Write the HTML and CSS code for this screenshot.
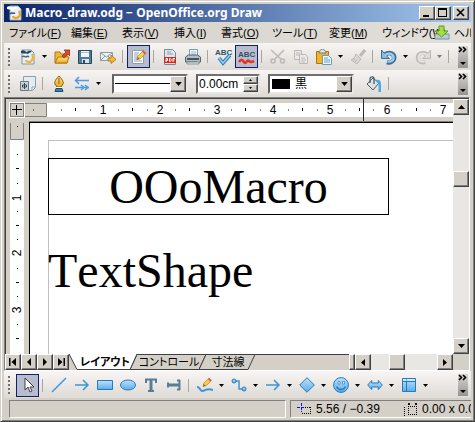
FILE: index.html
```html
<!DOCTYPE html>
<html lang="ja">
<head>
<meta charset="utf-8">
<meta name="viewport" content="width=device-width, initial-scale=1">
<title>Macro_draw.odg - OpenOffice.org Draw</title>
<link rel="stylesheet" href="styles.css">
</head>
<body>
<svg class="defs" aria-hidden="true">
  <defs>
    <linearGradient id="blue" x1="0" y1="0" x2="0" y2="1"><stop offset="0" stop-color="#bfe2fb"/><stop offset="1" stop-color="#58aeea"/></linearGradient>
    <linearGradient id="gold" x1="0" y1="0" x2="0" y2="1"><stop offset="0" stop-color="#ffe680"/><stop offset="1" stop-color="#f0a818"/></linearGradient>
    <symbol id="doc" viewBox="0 0 16 16">
      <path d="M2 1h9l3 3v11H2z" fill="#e8f0f4" stroke="#7f97a5"/>
      <path d="M1 2c3-2 4 1 6 1 2-2 4-1 5 0-2 0-3 1-4 2C6 4 4 5 1 4z" fill="#26485f"/>
      <path d="M2 8c2-2 3 0 4 0 1-1 2-1 3 0" fill="none" stroke="#47677b" stroke-width="1.5"/>
      <path d="M12 5c2 4 0 8-3 8-2 0-3-1-3-2" fill="none" stroke="#f3b32b" stroke-width="2"/>
    </symbol>
    <symbol id="arrow-r" viewBox="0 0 16 16"><path d="M1 8h12M9 3l5 5-5 5" fill="none" stroke="#3b95dd" stroke-width="1.5"/></symbol>
    <symbol id="down" viewBox="0 0 5 3"><path d="M0 0h5L2.500 3z"/></symbol>
    <symbol id="more" viewBox="0 0 10 22"><path d="M1 1l2.500 2.500L1 6M5 1l2.500 2.500L5 6" fill="none" stroke="#000" stroke-width="1.600"/><path d="M2 16h6l-3 3z"/></symbol>
    <symbol id="pencil" viewBox="0 0 16 16">
      <path d="M5 11l1-4 6-6 3 3-6 6z" fill="#f8cf48" stroke="#a57c20" stroke-width=".8"/><path d="M11 2l1.500-1.500 3 3L14 5z" fill="#e4524b"/><path d="M5 11l1-3 2 2z" fill="#8a6030"/>
    </symbol>
  </defs>
</svg>

<div class="window">
  <header class="titlebar">
    <svg class="i16" viewBox="0 0 16 16"><path d="M3 1h8l3 3v11H3z" fill="#e8f0f4" stroke="#9aa"/><path d="M0 2c3-2 4 1 6 1 2-2 4-1 5 0-2 0-3 1-4 2C5 4 3 5 0 4z" fill="#fff"/><path d="M12 6c2 4 0 7-3 7-2 0-3-1-3-2" fill="none" stroke="#f0a018" stroke-width="2"/><path d="M3 9c2-2 3 0 5-1" fill="none" stroke="#357" stroke-width="1.500"/></svg>
    <h1 class="title">Macro_draw.odg − OpenOffice.org Draw</h1>
    <div class="caption-buttons">
      <button class="raised cap" aria-label="最小化"><svg viewBox="0 0 12 10"><path d="M2 7h6v2H2z"/></svg></button>
      <button class="raised cap" aria-label="最大化"><svg viewBox="0 0 12 10"><path d="M1 0h9v9H1zM2 2v6h7V2z" fill-rule="evenodd"/></svg></button>
      <button class="raised cap close" aria-label="閉じる"><svg viewBox="0 0 12 10"><path d="M2 1l7 7M9 1L2 8" fill="none" stroke="#000" stroke-width="1.600"/></svg></button>
    </div>
  </header>

  <nav class="menubar">
    <button>ファイル(<u>F</u>)</button><button>編集(<u>E</u>)</button><button>表示(<u>V</u>)</button><button>挿入(<u>I</u>)</button><button>書式(<u>O</u>)</button><button>ツール(<u>T</u>)</button><button>変更(<u>M</u>)</button><button>ウィンドウ(<u>W</u>)</button><button>ヘル</button>
    <svg class="update i16" viewBox="0 0 16 16"><path d="M1 9h14v5H1z" fill="#b8cbd6" stroke="#7892a2"/><path d="M5 1h5v5h4l-6.500 6L1 6h4z" fill="#a6de42" stroke="#5a9c1c"/></svg>
  </nav>

  <div class="toolbar" role="toolbar" aria-label="標準">
    <i class="grip"></i>
    <button class="tool" aria-label="新規"><svg class="i16"><use href="#doc"/></svg></button>
    <button class="drop" aria-label="新規の種類"><svg><use href="#down"/></svg></button>
    <button class="tool" aria-label="開く"><svg class="i16" viewBox="0 0 16 16"><path d="M1 14V3h5l1 2h6v9z" fill="#f3b735" stroke="#ad761a"/><path d="M1 14l3-6h11l-2 6z" fill="url(#gold)" stroke="#ad761a"/><path d="M8 7l4-4-2-2h6v6l-2-2-4 4z" fill="#d94a26" stroke="#8c2a14" stroke-width=".7"/></svg></button>
    <button class="tool" aria-label="保存"><svg class="i16" viewBox="0 0 16 16"><path d="M1.500 1.500h13v13h-13z" fill="#4c7d9c" stroke="#27495f"/><path d="M4 2h8v6H4z" fill="#f3f6f8"/><path d="M4 3h8v1H4z" fill="#a9c3d2"/><path d="M5 10h7v4H5z" fill="#dce4e9"/><path d="M6 11h2v3H6z" fill="#27495f"/></svg></button>
    <button class="tool" aria-label="メール送信"><svg class="i16" viewBox="0 0 16 16"><path d="M.5 3.500h12v8H.5z" fill="#edf1f3" stroke="#8b9ba4"/><path d="M1 4l5.500 4L12 4M1 11l4-4M12 11L8 7" fill="none" stroke="#8b9ba4"/><path d="M8 9h3V6l5 4.500-5 4V12H8z" fill="#f6b83a" stroke="#a87112" stroke-width=".8"/></svg></button>
    <i class="sep"></i>
    <button class="tool on" aria-label="編集モード"><svg class="i16" viewBox="0 0 16 16"><path d="M1.500 1.500h11v13h-11z" fill="#fff" stroke="#8aa0b0"/><path d="M3 4h5M3 6h4M3 8h3M3 10h3M3 12h8" stroke="#8aa0b0"/><use href="#pencil" x="1" y="1" width="15" height="14"/></svg></button>
    <i class="sep"></i>
    <button class="tool" aria-label="PDF"><svg class="i16" viewBox="0 0 16 16"><path d="M2.500.5h8l3 3v12h-11z" fill="#dce7ed" stroke="#718e9f"/><path d="M5 3h4M5 5h6" stroke="#8aa0b0"/><path d="M2 8h12v6H2z" fill="#e02318"/><path d="M4 13V9.500h1.500v2H4M7.500 9.500v3c2.500 0 2.500-3 0-3M11 13V9.500h2M11 11h1.500" fill="none" stroke="#fff"/></svg></button>
    <button class="tool" aria-label="印刷"><svg class="i16" viewBox="0 0 16 16"><path d="M4.500.5h8V8h-8z" fill="#f6fafc" stroke="#7b9cb0"/><path d="M6 3h5M6 5h5" stroke="#82bce2"/><path d="M.5 8l3-2h9l3 2v5H.5z" fill="#b3bfc7" stroke="#546571"/><path d="M2 9h12v2H2z" fill="#47545d"/><path d="M2 13h12v2H2z" fill="#dde5e9" stroke="#546571" stroke-width=".6"/><path d="M12 12h2v1h-2z" fill="#7bd13b"/></svg></button>
    <i class="sep"></i>
    <button class="tool" aria-label="スペルチェック"><svg class="i18" viewBox="0 0 18 18"><text class="abc" x="0" y="7">ABC</text><path d="M4 10l4 5 7-8" fill="none" stroke="#2877ad" stroke-width="3.500"/><path d="M4 10l4 5 7-8" fill="none" stroke="#8fd2fa" stroke-width="1.600"/></svg></button>
    <button class="tool on" aria-label="自動スペルチェック"><svg class="i18" viewBox="0 0 18 18"><text class="abc" x="0" y="9">ABC</text><path d="M1 14c2-3 3-3 5 0s3-3 5-1 3 1 5 0" fill="none" stroke="#e8321e" stroke-width="2.600"/></svg></button>
    <i class="sep"></i>
    <button class="tool" aria-label="切り取り" disabled><svg class="i16" viewBox="0 0 16 16"><g fill="none" stroke="#bcbab8" stroke-width="1.600"><path d="M1 1l10 9M14 1L5 10"/><circle cx="3" cy="12" r="2"/><circle cx="12.500" cy="12" r="2"/></g></svg></button>
    <button class="tool" aria-label="コピー" disabled><svg class="i16" viewBox="0 0 16 16"><g fill="#ebe9e8" stroke="#bcbab8"><path d="M1.500 1.500h7v9h-7z"/><path d="M6.500 5.500h6l2 2v7h-8z"/><path d="M3 4h4M3 6h3M8 9h4M8 11h5M8 13h4"/></g></svg></button>
    <button class="tool" aria-label="貼り付け"><svg class="i16" viewBox="0 0 16 16"><path d="M.5 2.500h12v12H.5z" fill="#f0b429" stroke="#a97711"/><path d="M3 4c0-3 2-3 3.500-4C8 1 10 1 10 4z" fill="#dce2e6" stroke="#6d7c86"/><path d="M6.500 6.500h6l3 3v6h-9z" fill="#eff7fc" stroke="#6d9abb"/><path d="M8 9h4M8 11h6M8 13h6" stroke="#5ba0d1"/></svg></button>
    <button class="drop" aria-label="貼り付けの形式"><svg><use href="#down"/></svg></button>
    <button class="tool" aria-label="書式の複写" disabled><svg class="i16" viewBox="0 0 16 16"><path d="M15 1l-5 6" stroke="#bcbab8" stroke-width="3"/><path d="M6 5l5 5-4 5-6-4c3-1 4-3 5-6z" fill="#d8d6d4" stroke="#bcbab8"/><path d="M3 11l2-1M5 13l2-2" stroke="#bcbab8"/></svg></button>
    <i class="sep"></i>
    <button class="tool" aria-label="元に戻す"><svg class="i16" viewBox="0 0 16 16"><path d="M3 6c6-4 11-1 10 4-1 3-4 4-7 3" fill="none" stroke="#3a6d98" stroke-width="4.500"/><path d="M.5 1v8.500h8L5.500 7 8 5 3 4z" fill="#86bce4" stroke="#3a6d98"/><path d="M4 6c5-3 9-1 8.500 4-1 2-3 3-6 2.500" fill="none" stroke="#9bcaed" stroke-width="2.400"/></svg></button>
    <button class="drop" aria-label="元に戻す履歴"><svg><use href="#down"/></svg></button>
    <button class="tool" aria-label="やり直し" disabled><svg class="i16" viewBox="0 0 16 16"><path d="M13 6C7 2 2 5 3 10c1 3 4 4 7 3" fill="none" stroke="#bcbab8" stroke-width="4"/><path d="M15.500 1v8.500h-8l3-2.500L8 5l5-1z" fill="#dedcda" stroke="#bcbab8"/><path d="M12 6C7 3 3 5 3.500 10c1 2 3 3 6 2.500" fill="none" stroke="#e6e4e2" stroke-width="2"/></svg></button>
    <button class="drop" aria-label="やり直し履歴" disabled><svg><use href="#down"/></svg></button>
    <i class="sep"></i>
    <button class="overflow" aria-label="その他"><svg><use href="#more"/></svg></button>
  </div>

  <div class="toolbar" role="toolbar" aria-label="線と塗りつぶし">
    <i class="grip"></i>
    <button class="tool" aria-label="スタイル"><svg class="i16" viewBox="0 0 16 16"><path d="M3.500.5h12v11l-3 3h-9z" fill="#e5ecf0" stroke="#8aa0ae"/><path d="M15 11h-3v3" fill="#fff" stroke="#8aa0ae"/><path d="M.5 5.500h8v9h-8z" fill="#c8d2d9" stroke="#667a88"/><path d="M4.500 7v6M2.500 9h4v2h-4z" fill="#fff" stroke="#34444f"/></svg></button>
    <i class="sep"></i>
    <button class="tool" aria-label="線"><svg class="i16" viewBox="0 0 16 16"><path d="M8 0c3 3 5 6 4 8l-2 3H6L4 8c-1-2 1-5 4-8z" fill="url(#gold)" stroke="#805810"/><path d="M8 2v6" stroke="#805810"/><path d="M5 11h6v1H5z" fill="#f7fafc"/><path d="M5 12.500h6l1 3H4z" fill="#3a7fb5" stroke="#1c4a70"/></svg></button>
    <button class="tool" aria-label="線の端"><svg class="i16" viewBox="0 0 16 16"><path d="M1 4.500h14M5 1L1.500 4.500 5 8M1 11.500h14M7 9l3 2.500L7 14M11 9l3 2.500-3 2.500" fill="none" stroke="#4c9cde" stroke-width="1.500"/></svg></button>
    <button class="drop" aria-label="線の端の種類"><svg><use href="#down"/></svg></button>
    <button class="field line-style" aria-label="線のスタイル"><span class="stroke"></span><span class="raised knob"><svg><use href="#down"/></svg></span></button>
    <div class="field width"><input aria-label="線の幅" value="0.00cm"><span class="spin"><button class="raised" aria-label="増やす"><svg viewBox="0 0 3 2"><path d="M0 2h3L1.500 0z"/></svg></button><button class="raised" aria-label="減らす"><svg viewBox="0 0 3 2"><path d="M0 0h3L1.500 2z"/></svg></button></span></div>
    <button class="field color" aria-label="線の色 黒"><span class="swatch"></span><span class="name">黒</span><span class="raised knob"><svg><use href="#down"/></svg></span></button>
    <button class="tool fill" aria-label="塗りつぶし"><svg class="i16" viewBox="0 0 16 16"><path d="M1 8l6-6 6 5-6 7z" fill="#dce1e4" stroke="#4d5b65"/><path d="M4 7V3c0-3 5-3 4 1v4" fill="none" stroke="#4d5b65" stroke-width="1.300"/><path d="M9 4c4-1 6 0 6 4v8h-2.500V8z" fill="#4fa9e6"/></svg></button>
    <i class="sep"></i>
    <button class="overflow" aria-label="その他"><svg><use href="#more"/></svg></button>
  </div>

  <main class="editor">
    <div class="workspace">
      <div class="corner"><button aria-label="原点"><svg viewBox="0 0 12 12"><path d="M1 5.500h10M5.500 1v10" stroke="#000"/></svg></button></div>
      <svg class="hruler">
        <rect class="strip" y="4" width="100%" height="14"/>
        <path class="margin" d="M0 4.500h21.500v13H0"/>
        <path d="M8 11h1M36 11h1M65 11h1M93 11h1M122 11h1M150 11h1M179 11h1M206 11h1M235 11h1M263 11h1M292 11h1M320 11h1M348 11h1M376 11h1M405 11h1" stroke="#000"/>
        <path d="M50.500 9v3M107.500 9v3M164.500 9v3M220.500 9v3M277.500 9v3M334.500 9v3M391.500 9v3" stroke="#000"/>
        <path d="M338.500 0v22" stroke="#222a3c"/>
        <g class="nums"><text x="78" y="15">1</text><text x="135" y="15">2</text><text x="192" y="15">3</text><text x="248" y="15">4</text><text x="305" y="15">5</text><text x="362" y="15">6</text><text x="418" y="15">7</text></g>
      </svg>
      <svg class="vruler">
        <rect class="strip" x="4" width="14" height="100%"/>
        <path class="margin" d="M4.500 0v16.500h13V0"/>
        <path d="M11 3.500h1M11 31.500h1M11 60.500h1M11 88.500h1M11 116.500h1M11 145.500h1M11 173.500h1M11 201.500h1M10 45.500h3M10 102.500h3M10 159.500h3M10 215.500h3" stroke="#000"/>
        <g class="nums"><text transform="translate(15 75) rotate(-90)">1</text><text transform="translate(15 130) rotate(-90)">2</text><text transform="translate(15 187) rotate(-90)">3</text></g>
      </svg>
      <section class="canvas">
        <div class="page">
          <div class="shape boxed">OOoMacro</div>
          <div class="shape">TextShape</div>
        </div>
      </section>
      <div class="vscroll">
        <button class="raised" aria-label="上へ"><svg viewBox="0 0 7 4"><path d="M0 4h7L3.500 0z"/></svg></button>
        <span class="before"></span><span class="raised thumb"></span><span class="after"></span>
        <button class="raised" aria-label="下へ"><svg viewBox="0 0 7 4"><path d="M0 0h7L3.500 4z"/></svg></button>
      </div>
    </div>
    <div class="bottom-row">
      <button class="raised" aria-label="最初"><svg class="nav" viewBox="0 0 8 8"><path d="M0 0h1.500v8H0zM7 0v8L2.500 4z"/></svg></button>
      <button class="raised" aria-label="前"><svg class="nav" viewBox="0 0 8 8"><path d="M6 0v8L2 4z"/></svg></button>
      <button class="raised" aria-label="次"><svg class="nav" viewBox="0 0 8 8"><path d="M2 0v8l4-4z"/></svg></button>
      <button class="raised" aria-label="最後"><svg class="nav" viewBox="0 0 8 8"><path d="M6.500 0H8v8H6.500zM1 0v8l4.500-4z"/></svg></button>
      <div class="tabs">
        <button class="tab active"><svg viewBox="0 0 68 16" preserveAspectRatio="none"><path d="M0 0l8 15.500h53L68 0"/></svg><span>レイアウト</span></button>
        <button class="tab"><svg viewBox="0 0 76 16" preserveAspectRatio="none"><path d="M7 .5L0 15.500h69L76 .5z"/></svg><span>コントロール</span></button>
        <button class="tab last"><svg viewBox="0 0 56 16" preserveAspectRatio="none"><path d="M7 .5L0 15.500h49L56 .5z"/></svg><span>寸法線</span></button>
      </div>
      <span class="raised splitter"></span>
      <div class="hscroll">
        <button class="raised" aria-label="左へ"><svg viewBox="0 0 4 7"><path d="M4 0v7L0 3.500z"/></svg></button>
        <span class="before"></span><span class="raised thumb"></span><span class="after"></span>
        <button class="raised" aria-label="右へ"><svg viewBox="0 0 4 7"><path d="M0 0v7l4-3.500z"/></svg></button>
      </div>
    </div>
  </main>

  <div class="toolbar drawing" role="toolbar" aria-label="図形描画">
    <i class="grip"></i>
    <button class="tool on" aria-label="選択"><svg class="i16" viewBox="0 0 16 16"><path d="M5 1v12l3-3 2 5 2-1-2-4h4z" fill="#fff" stroke="#39434a"/></svg></button>
    <i class="sep"></i>
    <button class="tool" aria-label="線"><svg class="i16" viewBox="0 0 16 16"><path d="M1 15L15 1" stroke="#3b95dd" stroke-width="1.500"/></svg></button>
    <button class="tool" aria-label="矢印"><svg class="i16"><use href="#arrow-r"/></svg></button>
    <button class="tool" aria-label="四角形"><svg class="i16" viewBox="0 0 16 16"><path d="M.5 3.500h15v9H.5z" fill="url(#blue)" stroke="#2878bd"/></svg></button>
    <button class="tool" aria-label="楕円"><svg class="i16" viewBox="0 0 16 16"><ellipse cx="8" cy="8" rx="7.500" ry="5" fill="url(#blue)" stroke="#2878bd"/></svg></button>
    <button class="tool" aria-label="テキスト"><svg class="i16" viewBox="0 0 16 16"><path d="M2 2.500h12M3 2v4M13 2v4M5 14h6" fill="none" stroke="#557f98" stroke-width="2"/><path d="M8 2v12" stroke="#557f98" stroke-width="3"/></svg></button>
    <button class="tool" aria-label="縦書きテキスト"><svg class="i16" viewBox="0 0 16 16"><path d="M13.500 3v10M11 3.500h3M11 12.500h3M2 5.500v5" fill="none" stroke="#557f98" stroke-width="2"/><path d="M2 8h12" stroke="#557f98" stroke-width="3"/></svg></button>
    <i class="sep"></i>
    <button class="tool" aria-label="曲線"><svg class="i16" viewBox="0 0 16 16"><path d="M0 10c3-1 3 5 6 4s4-3 10-1" fill="none" stroke="#3b95dd" stroke-width="2"/><use href="#pencil" x="2" width="13" height="14"/></svg></button>
    <button class="drop" aria-label="曲線の種類"><svg><use href="#down"/></svg></button>
    <button class="tool" aria-label="コネクタ"><svg class="i16" viewBox="0 0 16 16"><path d="M3 4h5v8h5" fill="none" stroke="#3b95dd" stroke-width="1.500"/><circle cx="3" cy="4" r="2" fill="url(#blue)" stroke="#2878bd"/><circle cx="13" cy="12" r="2" fill="url(#blue)" stroke="#2878bd"/></svg></button>
    <button class="drop" aria-label="コネクタの種類"><svg><use href="#down"/></svg></button>
    <button class="tool" aria-label="線と矢印"><svg class="i16"><use href="#arrow-r"/></svg></button>
    <button class="drop" aria-label="矢印の種類"><svg><use href="#down"/></svg></button>
    <button class="tool" aria-label="基本図形"><svg class="i16" viewBox="0 0 16 16"><path d="M8 .7L15.300 8 8 15.300.7 8z" fill="url(#blue)" stroke="#2878bd"/></svg></button>
    <button class="drop" aria-label="基本図形の種類"><svg><use href="#down"/></svg></button>
    <button class="tool" aria-label="記号図形"><svg class="i16" viewBox="0 0 16 16"><circle cx="8" cy="8" r="7.400" fill="url(#blue)" stroke="#2878bd"/><path d="M5 4.500h2v2.500H5zM9.500 4.500h2v2.500h-2z" fill="#fff" stroke="#2878bd" stroke-width=".7"/><path d="M3.500 9.500c2 4 7 4 9 0" fill="none" stroke="#2878bd" stroke-width="1.400"/></svg></button>
    <button class="drop" aria-label="記号の種類"><svg><use href="#down"/></svg></button>
    <button class="tool" aria-label="ブロック矢印"><svg class="i16" viewBox="0 0 16 16"><path d="M.7 8l4-4.500V6h6.600V3.500l4 4.500-4 4.500V10H4.700v2.500z" fill="url(#blue)" stroke="#2878bd"/></svg></button>
    <button class="drop" aria-label="ブロック矢印の種類"><svg><use href="#down"/></svg></button>
    <button class="tool" aria-label="フローチャート"><svg class="i16" viewBox="0 0 16 16"><path d="M1.500 1.500h13v13h-13z" fill="url(#blue)" stroke="#2878bd"/><path d="M1 4.500h14M5.500 1v14" stroke="#2878bd"/><path d="M2 3h12" stroke="#e8f5fd"/></svg></button>
    <button class="drop" aria-label="フローチャートの種類"><svg><use href="#down"/></svg></button>
    <button class="overflow" aria-label="その他"><svg><use href="#more"/></svg></button>
  </div>

  <footer class="status">
    <div class="cell"></div>
    <div class="cell info">
      <svg class="i16" viewBox="0 0 16 16"><path d="M1 6.500h9M5.500 2v9" stroke="#1111d8" stroke-dasharray="3 1"/><path d="M9 6.500h6M14.500 6v8M6 12.500h9" fill="none" stroke="#000" stroke-dasharray="1 1"/></svg>
      <span class="pos">5.56 / −0.39</span>
      <svg class="i16" viewBox="0 0 16 16"><path d="M6.500 5v9M6 5.500h9M14.500 5v9M6 13.500h9M2.500 6v9" fill="none" stroke="#000" stroke-dasharray="1 1"/><path d="M6 2l2 2M8 2L6 4M13 2l2 2M15 2l-2 2" stroke="#000" stroke-width=".9"/></svg>
      <span>0.00 x 0.00</span>
    </div>
  </footer>
</div>
</body>
</html>
```
FILE: styles.css
```css
* { box-sizing: border-box; }
html, body { margin: 0; height: 100%; }
body {
  overflow: hidden;
  font: 12px/16px "Liberation Sans", "Noto Sans CJK JP", sans-serif;
  font-feature-settings: "palt";
  color: #000;
}
button, input { font: inherit; font-feature-settings: inherit; color: inherit; padding: 0; border: 0; background: none; border-radius: 0; }
button { display: flex; align-items: center; justify-content: center; flex: none; white-space: nowrap; }
svg { flex: none; display: block; }
.defs { position: absolute; width: 0; height: 0; }
.i16 { width: 16px; height: 16px; }
.i18 { width: 18px; height: 18px; }

.window {
  height: 100vh;
  display: flex;
  flex-direction: column;
  background: #d4d0c8;
  border: 1px solid;
  border-color: #d4d0c8 #404040 #404040 #d4d0c8;
  box-shadow: inset 1px 1px #fff, inset -1px -1px #808080;
  padding: 3px;
}
.raised {
  background: #d4d0c8;
  border: 1px solid;
  border-color: #fff #404040 #404040 #fff;
  box-shadow: inset -1px -1px #808080;
}

.titlebar {
  flex: none;
  display: flex;
  align-items: center;
  height: 18px;
  padding: 0 2px 0 3px;
  background: linear-gradient(to right, #0a246a, #a6caf0);
}
.title { margin: 0 0 0 2px; flex: 1; min-width: 0; overflow: hidden; white-space: nowrap; color: #fff; font: bold 12px/18px "Noto Sans", sans-serif; }
.caption-buttons { display: flex; }
.cap { width: 16px; height: 14px; }
.cap svg { width: 12px; height: 10px; }
.close { margin-left: 2px; }

.menubar {
  position: relative;
  flex: none;
  display: grid;
  grid-template-columns: 62px 51px 52px 47px 51px 57px 53px 72px auto;
  height: 21px;
  padding-left: 5px;
  overflow: hidden;
  font-size: 11px;
  background: linear-gradient(to right, #d4d0c8, #e2dfda);
}
.menubar button { justify-content: flex-start; overflow: visible; }
.update { position: absolute; right: 21px; top: 3px; }

.toolbar {
  flex: none;
  display: flex;
  align-items: center;
  height: 27px;
  padding-left: 4px;
  background: linear-gradient(#f7f4f3, #dedad5);
}
.grip { flex: none; width: 2px; height: 18px; margin-right: 6px; background: repeating-linear-gradient(#74716c 0 2px, transparent 2px 4px); }
.tool { width: 23px; height: 23px; }
.on { border: 1px solid #0a246a; background: #b8bccd; }
.drop { width: 11px; height: 23px; }
.drop svg, .knob svg { width: 5px; height: 3px; }
.drop:disabled svg { fill: #777; }
.sep { flex: none; width: 8px; height: 13px; background: linear-gradient(#a9a6a2, #a9a6a2) 3px 0 / 1px 100% no-repeat; }
.overflow { width: 10px; height: 22px; margin: 0 3px 0 auto; background: linear-gradient(#d8d5d2, #969390); }
.overflow svg { width: 10px; height: 22px; }
.abc { font: bold 8px "Liberation Sans", sans-serif; fill: #315367; }

.field {
  display: flex;
  align-items: stretch;
  height: 20px;
  background: #fff;
  border: 2px solid;
  border-color: #707070 #e8e6e2 #e8e6e2 #606060;
}
.knob { flex: none; width: 16px; display: flex; align-items: center; justify-content: center; }
.knob svg { width: 7px; height: 4px; }
.line-style { width: 76px; margin: 0 8px; }
.stroke { flex: 1; align-self: center; height: 1px; margin-left: 1px; background: #000; }
.width { width: 64px; margin-right: 8px; }
.width input { flex: 1; min-width: 0; padding-left: 1px; outline: 0; }
.spin { flex: none; width: 15px; display: grid; grid-template-rows: 1fr 1fr; }
.spin svg { width: 3px; height: 2px; }
.color { width: 86px; }
.swatch { width: 18px; height: 10px; margin-left: 2px; align-self: center; background: #000; }
.name { flex: 1; text-align: left; padding-left: 5px; }
.fill { margin-left: 8px; }

.editor {
  flex: 1;
  min-height: 0;
  display: flex;
  flex-direction: column;
  margin-right: 1px;
  border-top: 1px solid #808080;
  border-left: 1px solid #808080;
  border-bottom: 1px solid #fff;
  border-right: 1px solid #fff;
}
.workspace {
  flex: 1;
  min-height: 0;
  display: grid;
  grid-template: 22px 1fr / 19px 4px 1fr 16px;
  border-top: 1px solid #404040;
  border-left: 1px solid #404040;
}
.corner { padding: 3px 0 0 3px; }
.corner button { width: 16px; height: 16px; border: 1px solid #fff; outline: 1px solid #808080; outline-offset: -2px; }
.corner svg { width: 12px; height: 12px; }
.hruler { grid-column: 2 / 4; width: 100%; height: 22px; }
.vruler { grid-area: 2 / 1 / 3 / 3; width: 100%; height: 100%; padding-top: 2px; }
.strip { fill: #fff; }
.margin { fill: #d4d0c8; stroke: #808080; }
.nums { font: 12px "Liberation Sans", sans-serif; text-anchor: middle; }
.canvas { grid-area: 2 / 3; min-width: 0; overflow: hidden; background: #fff; border-top: 1px solid #808080; box-shadow: inset 1px 1px #000; padding: 18px 0 0 19px; }
.page { height: 100%; border-top: 1px solid #c0c0c0; border-left: 1px solid #c0c0c0; padding-top: 17px; }
.shape { font: 48px/55px "Liberation Serif", serif; font-kerning: none; margin-left: -1px; }
.boxed { width: 341px; max-width: 100%; border: 1px solid #000; text-align: center; margin-bottom: 28px; }
.vscroll { grid-area: 1 / 4 / 3 / 5; display: flex; flex-direction: column; background: #e9e7e3; }
.vscroll button { height: 16px; }
.vscroll svg { width: 7px; height: 4px; }
.vscroll .before { flex: 56; }
.vscroll .thumb { flex: none; height: 16px; }
.vscroll .after { flex: 150; }

.bottom-row { flex: none; display: flex; height: 16px; }
.bottom-row > button { width: 16px; }
.nav { width: 8px; height: 8px; }
.tabs { flex: 1; min-width: 0; display: flex; font-size: 11px; box-shadow: inset 0 1px #404040; }
.tab { position: relative; width: 76px; height: 16px; margin-left: -7px; padding-left: 2px; }
.tab svg { position: absolute; inset: 0; width: 100%; height: 100%; fill: #d4d0c8; stroke: #404040; }
.tab span { position: relative; }
.active { width: 68px; margin-left: 0; padding-left: 4px; font-weight: bold; z-index: 1; }
.active svg { fill: #fff; }
.last { width: 56px; }
.splitter { width: 6px; }
.hscroll { flex: none; width: 98px; display: flex; margin-right: 16px; background: #e9e7e3; }
.hscroll button, .hscroll .thumb { flex: none; width: 16px; }
.hscroll svg { width: 4px; height: 7px; }
.hscroll .before { flex: 18; }
.hscroll .after { flex: 32; }

.drawing { border-top: 1px solid #f7f4f3; }
.status { flex: none; display: flex; gap: 4px; padding: 2px 0 0 5px; height: 20px; overflow: hidden; }
.cell { flex: 280; min-width: 0; border: 1px solid; border-color: #808080 #fff #fff #808080; }
.info { flex: 178; display: flex; align-items: center; overflow: hidden; white-space: nowrap; padding-left: 5px; gap: 4px; border-right: 0; }
.pos { flex: none; width: 82px; }
```
